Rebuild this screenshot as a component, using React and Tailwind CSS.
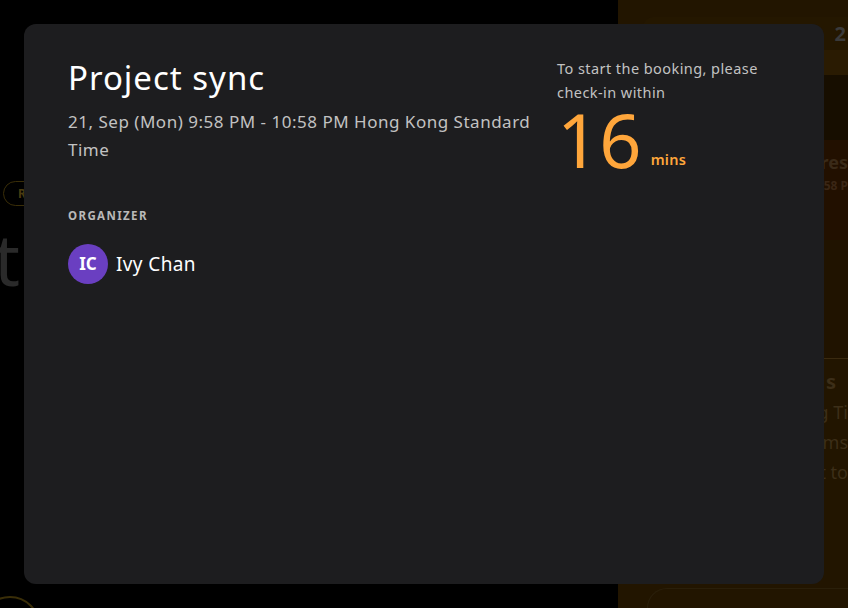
export default function App() {
  return (
    <div
      className="relative w-[848px] h-[608px] overflow-hidden bg-black"
      style={{ fontFamily: "'Noto Sans', 'Open Sans', sans-serif" }}
    >
      {/* dimmed page behind the dialog */}
      <div className="absolute inset-0 flex">
        <div className="relative w-[618px] h-full">
          <div className="absolute left-[3px] top-[181px] h-[25px] w-[40px] rounded-full border border-[#3a2e08] text-[12px] font-bold text-[#4a3c10] pl-[14px] leading-[23px]">
            R
          </div>
          <div className="absolute left-[-6px] top-[222px] text-[72px] leading-none text-[#2a2a2a]">t</div>
          <div className="absolute left-[-20px] top-[596px] h-[60px] w-[60px] rounded-full border-2 border-[#3a2e08]" />
        </div>
        <div className="flex-1 h-full bg-[#221500] flex flex-col pl-[25px] pt-[17px]">
          <div className="rounded-tl-[10px] bg-[#241700] h-[33px] flex items-center justify-end pr-[2px] text-[20px] font-bold text-[#3a3a3a]">
            2
          </div>
          <div className="h-[25px] bg-[#2a1b02]" />
          <div className="h-[65px] bg-[#170e00]" />
          <div className="h-[100px] bg-[#221000] flex flex-col items-end pt-[10px] text-[18px] font-bold text-[#3a2a18] leading-[24px]">
            <span>gres</span>
            <span className="text-[12px] text-[#3a2615]">58 P</span>
          </div>
          <div className="h-[118px] bg-[#201300]" />
          <div className="border-t border-[#3a2a10] pt-[8px] flex flex-col items-end text-[20px] font-bold text-[#3c2e18] leading-[30px]">
            <span className="pr-[12px]">s</span>
            <span className="text-[18px] font-normal">g Ti</span>
            <span className="text-[18px] font-normal">ms</span>
            <span className="text-[18px] font-normal">et to</span>
          </div>
          <div className="flex-1" />
          <div className="h-[20px] border-t border-[#2a1f0a] rounded-tl-[20px] border-l ml-[4px]" />
        </div>
      </div>

      {/* dialog */}
      <div className="absolute left-[24px] top-[24px] w-[800px] h-[560px] rounded-[12px] bg-[#1d1d1f] px-[44px] pt-[32px] flex">
        <div className="flex-1 min-w-0">
          <h1 className="text-[33px] leading-[44px] tracking-[0.03em] text-white">Project sync</h1>
          <p className="mt-[8px] w-[468px] text-[17px] leading-[28px] tracking-[0.03em] text-[#c2c2c2]">
            21, Sep (Mon) 9:58 PM - 10:58 PM Hong Kong Standard Time
          </p>
          <div className="mt-[45px] text-[11.5px] font-bold tracking-[0.12em] text-[#b9b9b9] leading-[14px]">
            ORGANIZER
          </div>
          <div className="mt-[21px] flex items-center gap-[8px]">
            <div className="h-[40px] w-[40px] rounded-full bg-[#6a3fc1] flex items-center justify-center text-[17px] font-bold text-white">
              IC
            </div>
            <span className="text-[19px] tracking-[0.02em] text-white">Ivy Chan</span>
          </div>
        </div>
        <div className="w-[223px] shrink-0">
          <p className="w-[225px] text-[14.5px] leading-[24px] tracking-[0.03em] text-[#c2c2c2]">
            To start the booking, please check-in within
          </p>
          <div className="flex items-end mt-[1px]">
            <span className="text-[74px] leading-[70px] text-[#ffa63b]">16</span>
            <span className="ml-[9px] mb-[4px] text-[14.5px] font-semibold tracking-[0.02em] text-[#ffa63b]">mins</span>
          </div>
        </div>
      </div>
    </div>
  );
}
